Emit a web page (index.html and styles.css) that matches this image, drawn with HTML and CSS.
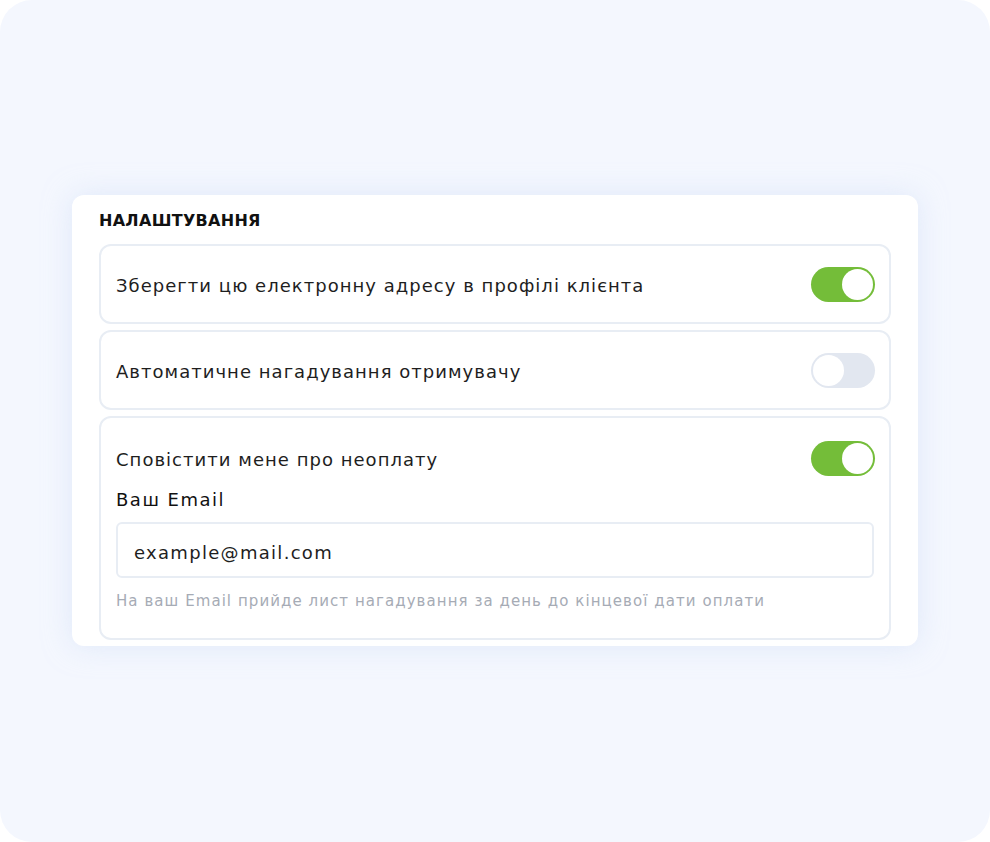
FILE: index.html
```html
<!DOCTYPE html>
<html lang="uk">
<head>
<meta charset="utf-8">
<title>Налаштування</title>
<link rel="stylesheet" href="styles.css">
</head>
<body>
<div class="stage">
  <section class="card">
    <h2 class="title">НАЛАШТУВАННЯ</h2>
    <div class="rows">
      <div class="row">
        <div class="row-head">
          <span class="row-label">Зберегти цю електронну адресу в профілі клієнта</span>
          <span class="toggle on"><span class="knob"></span></span>
        </div>
      </div>
      <div class="row">
        <div class="row-head">
          <span class="row-label">Автоматичне нагадування отримувачу</span>
          <span class="toggle off"><span class="knob"></span></span>
        </div>
      </div>
      <div class="row row-tall">
        <div class="row-head">
          <span class="row-label">Сповістити мене про неоплату</span>
          <span class="toggle on"><span class="knob"></span></span>
        </div>
        <label class="field-label">Ваш Email</label>
        <div class="input">example@mail.com</div>
        <p class="hint">На ваш Email прийде лист нагадування за день до кінцевої дати оплати</p>
      </div>
    </div>
  </section>
</div>
</body>
</html>
```

FILE: styles.css
```css
* { box-sizing: border-box; }
html, body { margin: 0; padding: 0; background: #ffffff; }
body {
  font-family: "DejaVu Sans", "Noto Sans", sans-serif;
  color: #1e1e1e;
}
.stage {
  width: 990px;
  height: 842px;
  background: #f4f7fe;
  border-radius: 32px;
  padding: 195px 72px 0 72px;
}
.card {
  background: #ffffff;
  border-radius: 12px;
  box-shadow: 0 0 28px rgba(205, 220, 245, 0.55);
  padding: 14px 27px 6px 27px;
}
.title {
  margin: 0 0 11px 0;
  font-size: 16px;
  font-weight: 700;
  letter-spacing: 0.3px;
  line-height: 24px;
  color: #111;
}
.rows {
  display: flex;
  flex-direction: column;
  gap: 6px;
}
.row {
  border: 2px solid #e8edf4;
  border-radius: 12px;
  padding: 0 14px 0 15px;
}
.row-head {
  height: 76px;
  display: flex;
  align-items: center;
  justify-content: space-between;
}
.row-tall .row-head { height: 80px; margin-bottom: -12px; }
.row-label {
  font-size: 18px;
  line-height: 24px;
  letter-spacing: 1.03px;
  padding-top: 4px;
}
.toggle {
  width: 64px;
  height: 35px;
  border-radius: 18px;
  display: flex;
  align-items: center;
  padding: 0 2px;
}
.toggle.on { background: #74bd39; justify-content: flex-end; }
.toggle.off { background: #e2e7f0; justify-content: flex-start; }
.knob {
  width: 31px;
  height: 31px;
  border-radius: 50%;
  background: #fff;
}
.field-label {
  display: block;
  font-size: 18px;
  line-height: 24px;
  letter-spacing: 1.5px;
  color: #111;
  margin: 2px 0 10px 0;
}
.input {
  height: 56px;
  border: 2px solid #e8edf4;
  border-radius: 6px;
  padding: 4px 16px 0 16px;
  display: flex;
  align-items: center;
  font-size: 18px;
  letter-spacing: 1.3px;
  margin-right: 1px;
}
.hint {
  margin: 12px 0 0 0;
  font-size: 15px;
  line-height: 22px;
  letter-spacing: 1.06px;
  color: #a6abb5;
  padding-bottom: 26px;
}
```
